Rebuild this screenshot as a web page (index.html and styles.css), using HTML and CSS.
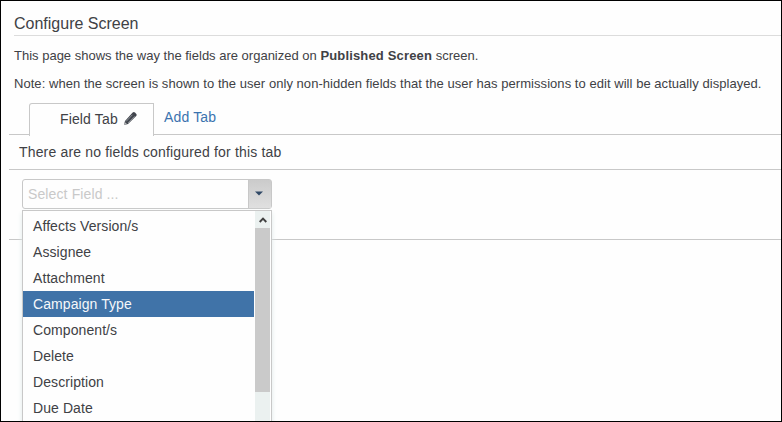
FILE: index.html
```html
<!DOCTYPE html>
<html lang="en">
<head>
<meta charset="utf-8">
<title>Configure Screen</title>
<link rel="stylesheet" href="styles.css">
</head>
<body>
<main class="page">
  <header class="intro">
    <h1 class="title"><span>Configure Screen</span></h1>
    <p class="summary">This page shows the way the fields are organized on <strong>Published Screen</strong> screen.</p>
    <p class="note">Note: when the screen is shown to the user only non-hidden fields that the user has permissions to edit will be actually displayed.</p>
  </header>
  <section class="config">
    <nav class="tabs">
      <div class="tab tab-active">
        <span class="tab-name">Field Tab</span>
        <svg class="pencil" width="15" height="15" viewBox="0 0 15 15">
          <path d="M1 14 2 10 9.7 1.6Q10.8.6 12 1.6L13.3 2.9Q14.2 4 13.2 5.1L5 13Z" fill="#40444c"/>
          <path d="M3 10.5 9.4 3.8M4.9 12 11.6 5.3" stroke="#9fa5ab" stroke-width=".8"/>
          <path d="M1 14 1.8 11 4 13Z" fill="#b5b8bb"/>
        </svg>
      </div>
      <a class="tab-add">Add Tab</a>
    </nav>
    <p class="empty">There are no fields configured for this tab</p>
    <div class="picker">
      <div class="select">
        <span class="placeholder">Select Field ...</span>
        <span class="toggle"><svg width="8" height="5" viewBox="0 0 8 5"><path d="M0 .5H8L4 4.5Z" fill="#304966"/></svg></span>
      </div>
      <div class="menu">
        <ul class="options">
          <li>Affects Version/s</li>
          <li>Assignee</li>
          <li>Attachment</li>
          <li class="selected">Campaign Type</li>
          <li>Component/s</li>
          <li>Delete</li>
          <li>Description</li>
          <li>Due Date</li>
        </ul>
        <div class="scrollbar">
          <span class="scroll-up"><svg width="8" height="6" viewBox="0 0 8 6"><path d="M.7 5 4 1.6 7.3 5" fill="none" stroke="#404040" stroke-width="1.9"/></svg></span>
          <span class="thumb"></span>
        </div>
      </div>
    </div>
  </section>
</main>
</body>
</html>
```
FILE: styles.css
```css
* { box-sizing: border-box; }
body { margin: 0; }
.page {
  height: 422px;
  overflow: hidden;
  border: 1px solid #000;
  background: #fefefe;
  color: #404145;
  font: 14px/20px "Liberation Sans", Arial, sans-serif;
}
.intro { padding-left: 13px; }
.title {
  height: 35px;
  margin: 0;
  padding-top: 13px;
  border-bottom: 1px solid #dcdcdc;
  font-size: 16px;
  font-weight: 400;
  line-height: 20px;
  white-space: nowrap;
}
.summary, .note {
  margin: 0;
  height: 28px;
  font-size: 13px;
  line-height: 20px;
  letter-spacing: .046px;
  white-space: nowrap;
}
.summary { margin-top: 10px; letter-spacing: 0; }
.summary strong { letter-spacing: .16px; }
.config { padding-left: 8px; }
.tabs {
  display: flex;
  height: 33px;
  border-bottom: 1px solid #c8c8c8;
}
.tab {
  display: flex;
  width: 125px;
  height: 33px;
  margin: 1px 0 0 20px;
  padding: 5px 0 0 30px;
  border: 1px solid #c8c8c8;
  border-bottom: 0;
  border-radius: 3px 0 0 0;
  background: #fefefe;
}
.tab-name { letter-spacing: .14px; }
.pencil { margin: 2px 0 0 5px; }
.tab-add { margin: 5px 0 0 10px; color: #3b73af; letter-spacing: .15px; }
.empty {
  height: 35px;
  margin: 0;
  padding: 7px 0 0 10px;
  border-bottom: 1px solid #c8c8c8;
  letter-spacing: .165px;
}
.picker {
  position: relative;
  height: 70px;
  padding: 9px 0 0 13px;
  border-bottom: 1px solid #c8c8c8;
}
.select {
  display: flex;
  width: 250px;
  height: 30px;
  border: 1px solid #c8c8c8;
  border-radius: 3px;
}
.placeholder { flex: 1; padding: 4px 0 0 5px; color: #c9c9c9; letter-spacing: .12px; }
.toggle {
  display: flex;
  width: 23px;
  align-items: center;
  justify-content: center;
  padding: 0 2px 2px 0;
  border-left: 1px solid #c8c8c8;
  background: linear-gradient(#cbcbcb, #e0e0e0);
}
.menu {
  position: absolute;
  top: 40px;
  left: 13px;
  display: flex;
  width: 250px;
  height: 230px;
  border: 1px solid #c8c8c8;
  background: #fefefe;
  box-shadow: 0 3px 5px #e0ebea;
}
.options {
  width: 231px;
  margin: 0;
  padding: 2px 0 0;
  list-style: none;
  letter-spacing: .08px;
}
.options li { height: 26px; padding-left: 10px; line-height: 26px; }
.options .selected { background: #4073a8; color: #f5f7fa; }
.scrollbar { width: 15px; margin-left: 1px; background: #ebf1f0; }
.scroll-up { display: flex; height: 17px; align-items: center; justify-content: center; }
.thumb { display: block; height: 164px; background: #cacaca; }
```
